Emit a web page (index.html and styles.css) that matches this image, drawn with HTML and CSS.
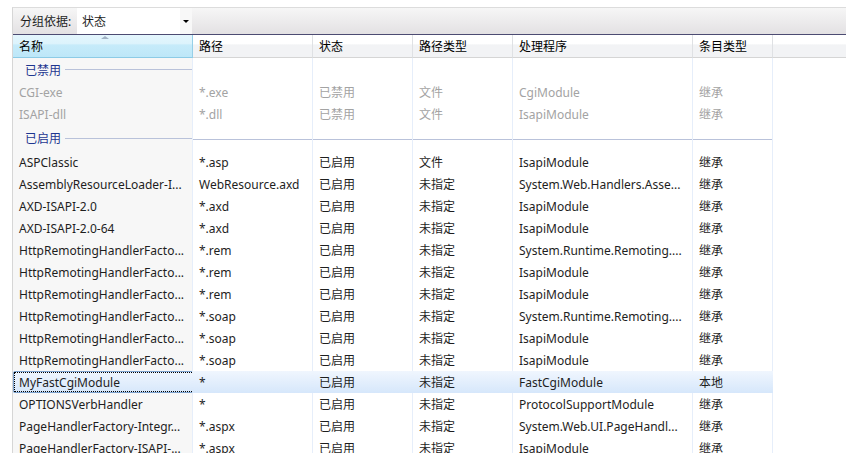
FILE: index.html
```html
<!DOCTYPE html>
<html lang="zh-CN">
<head>
  <meta charset="UTF-8">
  <title>处理程序映射</title>
  <link rel="stylesheet" href="styles.css">
</head>
<body>
  <div class="panel">
    <div class="toolbar">
      <span class="tb-label">分组依据:</span>
      <div class="combo">
        <span class="combo-text">状态</span>
        <span class="combo-btn"><span class="arrow"></span></span>
      </div>
    </div>

    <table class="list">
      <thead>
        <tr>
          <th class="c1 sorted">名称<span class="sort"></span></th>
          <th class="c2">路径</th>
          <th class="c3">状态</th>
          <th class="c4">路径类型</th>
          <th class="c5">处理程序</th>
          <th class="c6">条目类型</th>
          <th class="c7"></th>
        </tr>
      </thead>
      <tbody>
        <tr class="group first">
          <td class="gl"><div class="gwrap"><span class="gname">已禁用</span><span class="gline"></span></div></td>
          <td></td><td></td><td></td><td></td><td></td><td></td>
        </tr>
        <tr class="off"><td>CGI-exe</td><td>*.exe</td><td>已禁用</td><td>文件</td><td>CgiModule</td><td>继承</td><td></td></tr>
        <tr class="off"><td>ISAPI-dll</td><td>*.dll</td><td>已禁用</td><td>文件</td><td>IsapiModule</td><td>继承</td><td></td></tr>
        <tr class="group">
          <td class="gl"><div class="gwrap"><span class="gname">已启用</span><span class="gline"></span></div></td>
          <td></td><td></td><td></td><td></td><td></td><td></td>
        </tr>
        <tr><td>ASPClassic</td><td>*.asp</td><td>已启用</td><td>文件</td><td>IsapiModule</td><td>继承</td><td></td></tr>
        <tr><td>AssemblyResourceLoader-I...</td><td>WebResource.axd</td><td>已启用</td><td>未指定</td><td>System.Web.Handlers.Asse...</td><td>继承</td><td></td></tr>
        <tr><td>AXD-ISAPI-2.0</td><td>*.axd</td><td>已启用</td><td>未指定</td><td>IsapiModule</td><td>继承</td><td></td></tr>
        <tr><td>AXD-ISAPI-2.0-64</td><td>*.axd</td><td>已启用</td><td>未指定</td><td>IsapiModule</td><td>继承</td><td></td></tr>
        <tr><td>HttpRemotingHandlerFacto...</td><td>*.rem</td><td>已启用</td><td>未指定</td><td>System.Runtime.Remoting....</td><td>继承</td><td></td></tr>
        <tr><td>HttpRemotingHandlerFacto...</td><td>*.rem</td><td>已启用</td><td>未指定</td><td>IsapiModule</td><td>继承</td><td></td></tr>
        <tr><td>HttpRemotingHandlerFacto...</td><td>*.rem</td><td>已启用</td><td>未指定</td><td>IsapiModule</td><td>继承</td><td></td></tr>
        <tr><td>HttpRemotingHandlerFacto...</td><td>*.soap</td><td>已启用</td><td>未指定</td><td>System.Runtime.Remoting....</td><td>继承</td><td></td></tr>
        <tr><td>HttpRemotingHandlerFacto...</td><td>*.soap</td><td>已启用</td><td>未指定</td><td>IsapiModule</td><td>继承</td><td></td></tr>
        <tr><td>HttpRemotingHandlerFacto...</td><td>*.soap</td><td>已启用</td><td>未指定</td><td>IsapiModule</td><td>继承</td><td></td></tr>
        <tr class="selected"><td><span class="focus"></span>MyFastCgiModule</td><td>*</td><td>已启用</td><td>未指定</td><td>FastCgiModule</td><td>本地</td><td></td></tr>
        <tr><td>OPTIONSVerbHandler</td><td>*</td><td>已启用</td><td>未指定</td><td>ProtocolSupportModule</td><td>继承</td><td></td></tr>
        <tr><td>PageHandlerFactory-Integr...</td><td>*.aspx</td><td>已启用</td><td>未指定</td><td>System.Web.UI.PageHandl...</td><td>继承</td><td></td></tr>
        <tr><td>PageHandlerFactory-ISAPI-...</td><td>*.aspx</td><td>已启用</td><td>未指定</td><td>IsapiModule</td><td>继承</td><td></td></tr>
      </tbody>
    </table>
  </div>
</body>
</html>
```

FILE: styles.css
```css
body {
  margin: 0;
  background: #fff;
  font-family: "Noto Sans", "Noto Sans CJK SC", sans-serif;
  font-size: 12px;
  color: #1e1e1e;
  overflow: hidden;
}
.panel {
  margin: 7px 0 0 12px;
  border-top: 1px solid #dcdcdc;
  border-left: 1px solid #d6d6d6;
}
.toolbar {
  height: 26px;
  display: flex;
  align-items: center;
  background: linear-gradient(to bottom, #f6f6f6, #e3e1e3);
  border-bottom: 1px solid #4c4b72;
}
.tb-label {
  padding-left: 7px;
  width: 57px;
  color: #1e1e1e;
}
.combo {
  height: 26px;
  width: 115px;
  display: flex;
  align-items: center;
  background: #fff;
}
.combo-text {
  flex: 1;
  padding-left: 5px;
}
.combo-btn {
  width: 12px;
  height: 100%;
  background: #f8f8f8;
  display: flex;
  align-items: center;
  justify-content: center;
}
.arrow {
  border-left: 3px solid transparent;
  border-right: 3px solid transparent;
  border-top: 3px solid #000;
}
.list {
  border-spacing: 0;
  table-layout: fixed;
  width: 833px;
}
.list th, .list td {
  box-sizing: border-box;
  padding: 0 6px;
  white-space: nowrap;
  overflow: hidden;
  text-align: left;
  font-weight: normal;
}
.list th {
  height: 23px;
  background: linear-gradient(to bottom, #fff 0, #fff 40%, #f2f3f5 45%, #f2f3f5 100%);
  border-right: 1px solid #dfe1e4;
  border-bottom: 1px solid #d5d5d5;
  color: #000;
  position: relative;
}
.list th.sorted {
  background: linear-gradient(to bottom, #e4f6fd 0, #dcf3fc 40%, #c6ebfa 45%, #bde7f8 100%);
  border-right: 1px solid #96cfe8;
  border-bottom: 1px solid #8ccbe6;
}
.sort {
  position: absolute;
  left: 88px;
  top: 1px;
  border-left: 4px solid transparent;
  border-right: 4px solid transparent;
  border-bottom: 3px solid #a0b2c4;
}
.c1 { width: 180px; }
.c2 { width: 120px; }
.c3 { width: 100px; }
.c4 { width: 100px; }
.c5 { width: 180px; }
.c6 { width: 80px; }
.list th.c7 { border-right: none; }
.list td {
  height: 22px;
  border-right: 1px solid #e6eefa;
}
.list td:first-child {
  background: #f7f7f7;
}
.list td:last-child {
  border-right: none;
  background: #fff;
}
.off td {
  color: #a3a3a3;
}
.group td {
  height: 26px;
  padding: 0;
  background: linear-gradient(to bottom, transparent 53%, #b9c2da 53%, #b9c2da 57%, transparent 57%);
}
.group.first td {
  height: 23px;
  background: linear-gradient(to bottom, transparent 50%, #b9c2da 50%, #b9c2da 54%, transparent 54%);
}
.group td.gl {
  background: #f7f7f7;
}
.gwrap {
  display: flex;
  align-items: center;
}
.gname {
  padding-left: 12px;
  color: #1e3690;
}
.gline {
  flex: 1;
  margin-left: 4px;
  border-top: 1px solid #b9c2da;
}
.selected td {
  background: linear-gradient(to bottom, #f0f6fe, #d6e7fb);
  border-right-color: transparent;
}
.selected td:first-child {
  position: relative;
  background: linear-gradient(to bottom, #f0f6fe, #d6e7fb);
}
.focus {
  position: absolute;
  left: 0;
  top: 0;
  width: 760px;
  height: 22px;
  box-sizing: border-box;
  border: 1px solid #7da2ce;
  border-radius: 2px;
}
.focus::after {
  content: "";
  position: absolute;
  inset: 0;
  border: 1px dotted #000;
}
```
